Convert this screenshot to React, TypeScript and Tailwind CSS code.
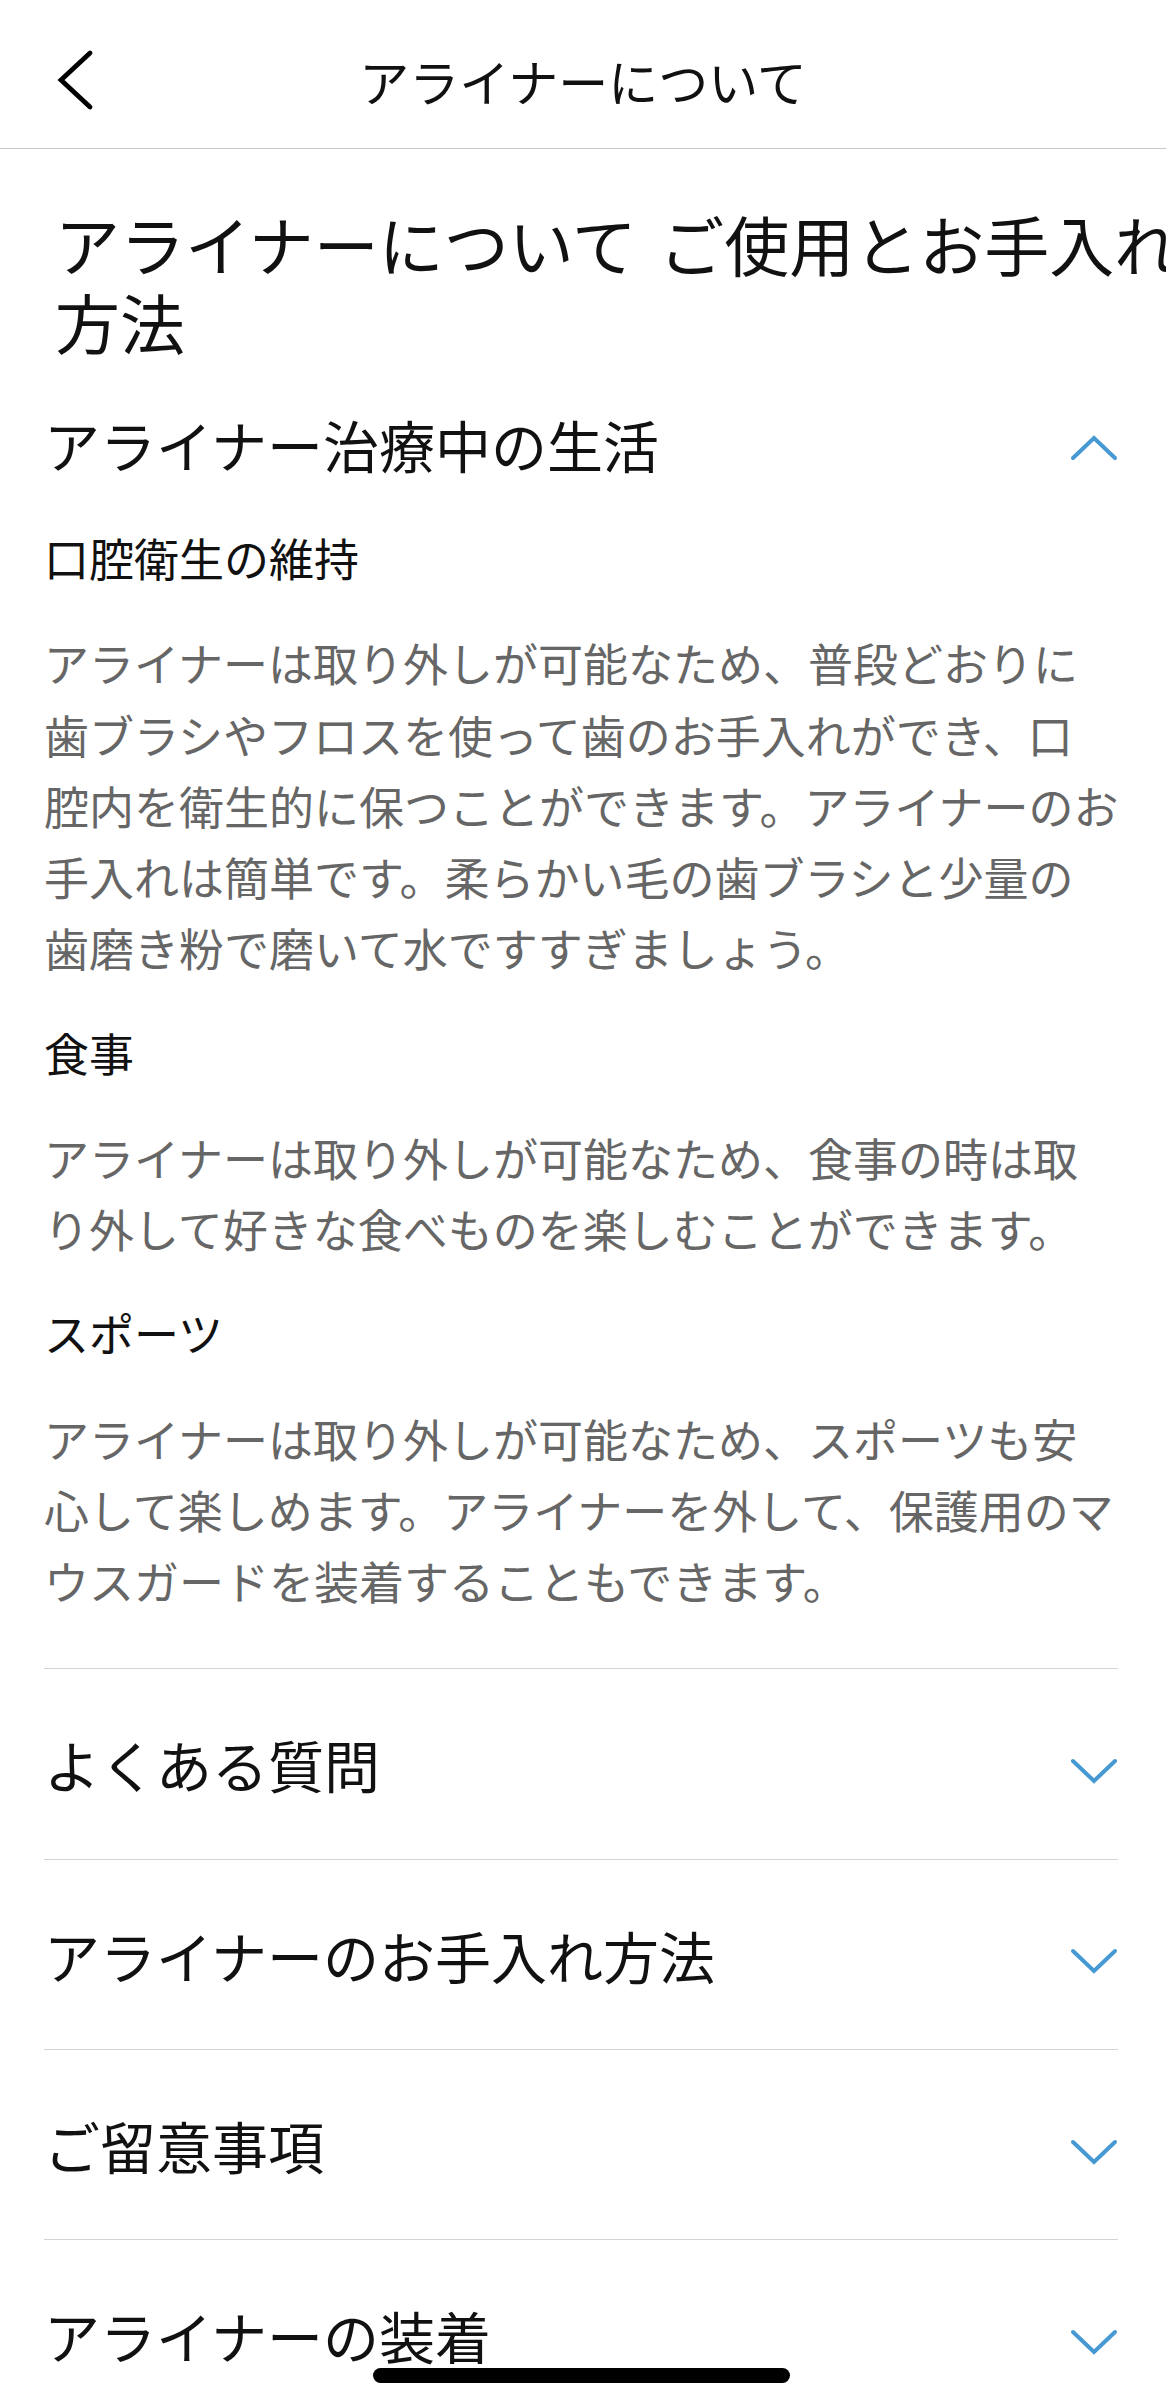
const sections = [
  {
    title: '口腔衛生の維持',
    lines: [
      'アライナーは取り外しが可能なため、普段どおりに',
      '歯ブラシやフロスを使って歯のお手入れができ、口',
      '腔内を衛生的に保つことができます。アライナーのお',
      '手入れは簡単です。柔らかい毛の歯ブラシと少量の',
      '歯磨き粉で磨いて水ですすぎましょう。',
    ],
  },
  {
    title: '食事',
    lines: [
      'アライナーは取り外しが可能なため、食事の時は取',
      'り外して好きな食べものを楽しむことができます。',
    ],
  },
  {
    title: 'スポーツ',
    lines: [
      'アライナーは取り外しが可能なため、スポーツも安',
      '心して楽しめます。アライナーを外して、保護用のマ',
      'ウスガードを装着することもできます。',
    ],
  },
];

const collapsedItems = ['よくある質問', 'アライナーのお手入れ方法', 'ご留意事項', 'アライナーの装着'];

function Chevron({ up }: { up?: boolean }) {
  return (
    <svg width="48" height="28" viewBox="0 0 48 28" fill="none" className={up ? 'shrink-0 translate-y-[4px]' : 'shrink-0 translate-y-[7px]'}>
      <polyline
        points={up ? '3,24 24,4 45,24' : '3,4 24,24 45,4'}
        stroke="#4799d4"
        strokeWidth="4"
        strokeLinecap="round"
        strokeLinejoin="miter"
      />
    </svg>
  );
}

export default function App() {
  return (
    <div className="relative w-[1166px] h-[2398px] overflow-hidden bg-white text-[#111] font-['Noto_Sans_CJK_JP','Noto_Sans',sans-serif]">
      {/* Header */}
      <header className="flex items-center h-[149px] pt-[12px] border-b border-[#c8c8c8]">
        <div className="w-[96px] shrink-0 pl-[56px]">
          <svg width="40" height="64" viewBox="0 0 40 64" fill="none">
            <polyline points="34,5 5,32 34,59" stroke="#000" strokeWidth="4.8" strokeLinecap="round" strokeLinejoin="miter" />
          </svg>
        </div>
        <div className="flex-1 text-center text-[50px] leading-[60px]">アライナーについて</div>
        <div className="w-[96px] shrink-0" />
      </header>

      {/* Page heading */}
      <h1 className="mt-[55px] pl-[55px] w-[1185px] text-[65px] leading-[78px] font-normal [word-spacing:8px]">
        アライナーについて ご使用とお手入れ方法
      </h1>

      {/* Accordion */}
      <div className="mt-[50px] pl-[44px] pr-[48px]">
        <div className="pb-[52px]">
          <div className="flex items-center justify-between h-[67px]">
            <span className="text-[56px] leading-[67px]">アライナー治療中の生活</span>
            <Chevron up />
          </div>
          <div className="pt-[45px]">
            {sections.map((s, i) => (
              <div key={s.title} className={i > 0 ? 'mt-[33px]' : ''}>
                <div className="text-[45px] leading-[71.25px] text-[#111]">{s.title}</div>
                <p className="mt-[34px] text-[45px] leading-[71.25px] text-[#666]">
                  {s.lines.map((l) => (
                    <span key={l} className="block whitespace-nowrap">{l}</span>
                  ))}
                </p>
              </div>
            ))}
          </div>
        </div>

        {collapsedItems.map((label) => (
          <div key={label} className="flex items-center justify-between h-[190.33px] border-t border-[#d4d4d4]">
            <span className="text-[56px] leading-[67px]">{label}</span>
            <Chevron />
          </div>
        ))}
      </div>

      {/* Home indicator */}
      <div className="absolute left-[373px] top-[2368px] w-[417px] h-[15px] rounded-full bg-black" />
    </div>
  );
}
